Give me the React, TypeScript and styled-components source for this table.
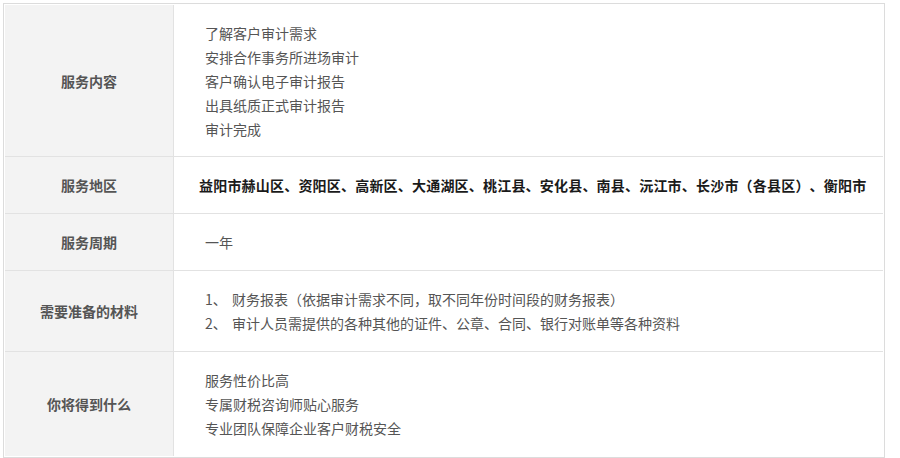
import React from "react";
import styled, { createGlobalStyle } from "styled-components";

const Global = createGlobalStyle`
  html, body { margin: 0; padding: 0; background: #fff; }
  body { font-family: "Noto Sans CJK SC", "Microsoft YaHei", sans-serif; text-spacing-trim: space-all; }
`;

const Page = styled.div`
  padding: 3px 0 0 3px;
`;

const Frame = styled.div`
  border: 1px solid #dcdcdc;
  padding: 1px;
  box-sizing: content-box;
  width: 878px;
`;

const Row = styled.div<{ $last?: boolean }>`
  display: grid;
  grid-template-columns: 169px 1fr;
  border-bottom: ${(p) => (p.$last ? "none" : "1px solid #e2e2e2")};
`;

const Label = styled.div`
  background: #f3f3f3;
  border-right: 1px solid #e2e2e2;
  display: flex;
  align-items: center;
  justify-content: center;
  font-size: 14px;
  font-weight: 700;
  color: #555;
`;

const Content = styled.div<{ $strong?: boolean; $pt?: number; $pb?: number }>`
  padding: ${(p) => p.$pt ?? 16}px 10px ${(p) => p.$pb ?? 16}px ${(p) => (p.$strong ? 25 : 31)}px;
  font-size: 14px;
  line-height: 24px;
  color: ${(p) => (p.$strong ? "#1a1a1a" : "#555")};
  font-weight: ${(p) => (p.$strong ? 700 : 400)};
  letter-spacing: ${(p) => (p.$strong ? "0.2px" : "0")};
  white-space: nowrap;
  text-spacing-trim: space-all;
`;

const Line = styled.div``;

const Num = styled.span`
  display: inline-block;
  width: 27px;
`;

const rows: { label: string; lines: React.ReactNode[]; strong?: boolean; pt?: number; pb?: number }[] = [
  {
    label: "服务内容",
    pt: 16,
    pb: 15,
    lines: ["了解客户审计需求", "安排合作事务所进场审计", "客户确认电子审计报告", "出具纸质正式审计报告", "审计完成"],
  },
  {
    label: "服务地区",
    strong: true,
    lines: ["益阳市赫山区、资阳区、高新区、大通湖区、桃江县、安化县、南县、沅江市、长沙市（各县区）、衡阳市"],
  },
  { label: "服务周期", lines: ["一年"] },
  {
    label: "需要准备的材料",
    lines: [
      <>
        <Num>1、</Num>财务报表（依据审计需求不同，取不同年份时间段的财务报表）
      </>,
      <>
        <Num>2、</Num>审计人员需提供的各种其他的证件、公章、合同、银行对账单等各种资料
      </>,
    ],
  },
  {
    label: "你将得到什么",
    lines: ["服务性价比高", "专属财税咨询师贴心服务", "专业团队保障企业客户财税安全"],
  },
];

export default function App() {
  return (
    <Page>
      <Global />
      <Frame>
        {rows.map((r, i) => (
          <Row key={r.label} $last={i === rows.length - 1}>
            <Label>{r.label}</Label>
            <Content $strong={r.strong} $pt={r.pt} $pb={r.pb}>
              {r.lines.map((l, j) => (
                <Line key={j}>{l}</Line>
              ))}
            </Content>
          </Row>
        ))}
      </Frame>
    </Page>
  );
}
